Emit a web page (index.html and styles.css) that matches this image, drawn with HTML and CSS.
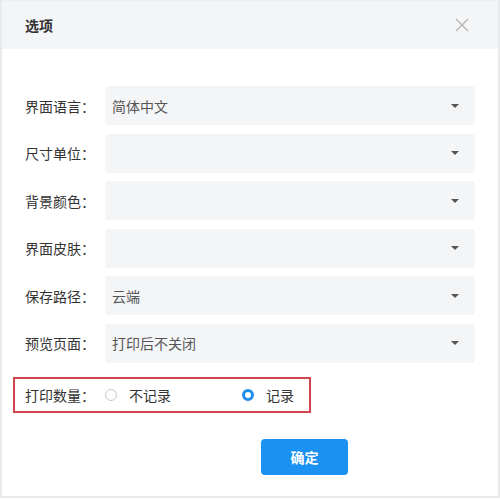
FILE: index.html
```html
<!DOCTYPE html>
<html lang="zh">
<head>
<meta charset="utf-8">
<link rel="stylesheet" href="styles.css">
</head>
<body>
<div class="dialog">
  <div class="header">
    <span class="title">选项</span>
    <svg class="close" width="14" height="14" viewBox="0 0 14 14"><path d="M1 1L13 13M13 1L1 13" stroke="#b4b4b4" stroke-width="1.3" fill="none"/></svg>
  </div>
  <div class="body">
    <div class="row"><span class="label">界面语言：</span><div class="select"><span>简体中文</span><i class="caret"></i></div></div>
    <div class="row"><span class="label">尺寸单位：</span><div class="select"><span></span><i class="caret"></i></div></div>
    <div class="row"><span class="label">背景颜色：</span><div class="select"><span></span><i class="caret"></i></div></div>
    <div class="row"><span class="label">界面皮肤：</span><div class="select"><span></span><i class="caret"></i></div></div>
    <div class="row"><span class="label">保存路径：</span><div class="select"><span>云端</span><i class="caret"></i></div></div>
    <div class="row"><span class="label">预览页面：</span><div class="select"><span>打印后不关闭</span><i class="caret"></i></div></div>
    <div class="highlight">
      <span class="label">打印数量：</span>
      <span class="radio"><i class="dot"></i>不记录</span>
      <span class="radio on"><i class="dot"></i>记录</span>
    </div>
    <div class="footer"><button class="ok">确定</button></div>
  </div>
</div>
</body>
</html>
```
FILE: styles.css
```css
html, body { margin: 0; padding: 0; background: #fff; }
body { font-family: "Noto Sans CJK SC", "Noto Sans", sans-serif; color: #333; }
.dialog {
  width: 496px; height: 495px;
  border: 2px solid #e8e9eb; border-top: 1px solid #eceef0;
  background: #fff;
}
.header {
  height: 48px; background: #f4f5f7;
  display: flex; align-items: center; justify-content: space-between;
  padding: 0 29px 0 23px;
}
.title { font-size: 14px; font-weight: bold; color: #333; }
.close { display: block; }
.body { padding: 37px 22px 0 23px; display: flex; flex-direction: column; }
.row { display: flex; align-items: center; height: 39px; margin-bottom: 8.6px; }
.label { width: 80px; font-size: 14px; color: #333; flex: none; }
.select {
  flex: none; width: 370px; height: 39px; background: #f4f5f7; border-radius: 4px;
  display: flex; align-items: center; justify-content: space-between;
  padding: 0 16px 0 7px; box-sizing: border-box; font-size: 14px; color: #555;
}
.caret {
  width: 0; height: 0; border-left: 4px solid transparent; border-right: 4px solid transparent;
  border-top: 4px solid #555;
}
.highlight {
  margin: 5px 0 0 -12px; width: 298px; height: 36px; box-sizing: border-box;
  border: 2px solid #d2464f; display: flex; align-items: center; padding-left: 10px;
}
.radio { display: flex; align-items: center; font-size: 14px; color: #333; }
.radio .dot {
  width: 12px; height: 12px; border-radius: 50%; border: 1.5px solid #c8c8c8; box-sizing: border-box;
  margin: 0 12px 0 0; background: #fff;
}
.radio:first-of-type { margin-left: 1px; }
.radio.on { margin-left: 71px; }
.radio.on .dot { border: 3.5px solid #1e8cf0; background: #fff; }
.footer { display: flex; padding-top: 26px; padding-left: 236px; }
.ok {
  width: 87px; height: 36px; border: none; border-radius: 4px; background: #1b92f2;
  color: #fff; font-family: inherit; font-size: 14px; font-weight: bold;
}
```
